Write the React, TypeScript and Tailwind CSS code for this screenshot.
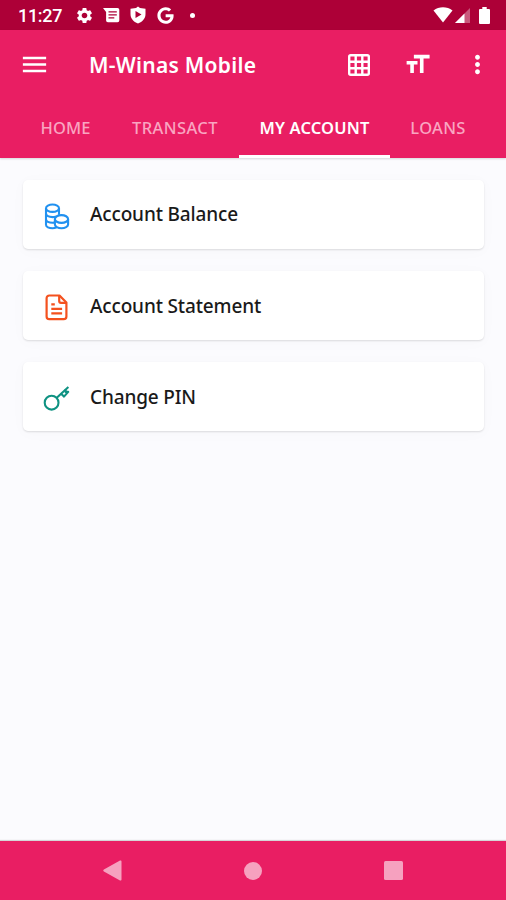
import type { ReactNode } from "react";
import { MdFormatSize, MdMenu, MdMoreVert, MdSettings } from "react-icons/md";
import { FaGoogle } from "react-icons/fa";

const tabs = [
  { label: "HOME", width: "w-[91px]", spacing: "tracking-[0.1px]" },
  { label: "TRANSACT", width: "w-[128px]", spacing: "tracking-[0.4px]" },
  { label: "MY ACCOUNT", width: "w-[151px]", spacing: "tracking-[0.15px]" },
  { label: "LOANS", width: "w-[96px]", spacing: "tracking-[0.3px]" },
];

const activeTab = "MY ACCOUNT";

function GridIcon() {
  return (
    <svg
      viewBox="0 0 22 22"
      className="ml-[2px] mr-[2px] w-[22px] h-[22px]"
      fill="none"
      stroke="currentColor"
      strokeWidth="2.400"
    >
      <rect x="1.200" y="1.200" width="19.600" height="19.600" rx="1.500" />
      <path d="M7.700 1v20M14.300 1v20M1 7.700h20M1 14.300h20" />
    </svg>
  );
}

function CoinsIcon() {
  return (
    <svg
      viewBox="0 0 27 27"
      className="w-[27px] h-[27px]"
      fill="none"
      stroke="#2191f0"
      strokeWidth="2.1"
    >
      <ellipse cx="9.500" cy="5.200" rx="6.500" ry="3.700" />
      <path d="M3 5v16.700c0 2 2.900 3.500 6.500 3.500 1.600 0 3-.3 4.100-.8" />
      <path d="M16 5v6.800" />
      <path d="M3 10.600c0 2 2.900 3.500 6.500 3.500 1.300 0 2.500-.2 3.500-.6" />
      <path d="M3 16.200c0 2 2.900 3.500 6.500 3.500.6 0 1.200 0 1.700-.1" />
      <ellipse cx="18.500" cy="16" rx="6.600" ry="3.900" fill="#fff" />
      <path d="M11.900 16v5.500c0 2 2.900 3.700 6.600 3.700s6.600-1.700 6.600-3.700V16" />
    </svg>
  );
}

function StatementIcon() {
  return (
    <svg
      viewBox="0 0 24 27"
      className="ml-[2px] w-[24px] h-[27px]"
      fill="none"
      stroke="#f4511e"
      strokeWidth="2.200"
      strokeLinejoin="round"
    >
      <path d="M4.300 1.500H14.500l6.900 7v14a2.700 2.700 0 0 1-2.700 2.700H4.300a2.700 2.700 0 0 1-2.700-2.700V4.200a2.700 2.700 0 0 1 2.700-2.700z" />
      <path d="M14.200 2v5a1.800 1.800 0 0 0 1.800 1.800h5" />
      <path d="M6.300 10.300h3.500M6.300 14.800h10.800M6.300 19.300h10.800" />
    </svg>
  );
}

function KeyIcon() {
  return (
    <svg
      viewBox="0 0 28 27"
      className="w-[28px] h-[27px]"
      fill="none"
      stroke="#0f9282"
      strokeWidth="2.100"
      strokeLinejoin="round"
    >
      <circle cx="8.600" cy="17.700" r="6.900" />
      <path d="M13.500 12.900 25.400 2" />
      <path d="M22.600 4.600v2.300h2.600l-4.200 4.700-3.200-3.200" />
    </svg>
  );
}

const items: { label: string; icon: ReactNode; offset: string }[] = [
  { label: "Account Balance", icon: <CoinsIcon />, offset: "-mt-px" },
  { label: "Account Statement", icon: <StatementIcon />, offset: "mt-px" },
  { label: "Change PIN", icon: <KeyIcon />, offset: "mt-px" },
];

function StatusBar() {
  return (
    <div className="flex h-[30px] shrink-0 items-center bg-[#ad0037] pl-[18px] pr-[16px] text-white">
      <span className="mt-[2px] w-[57px] text-[18px] leading-none font-medium tracking-[-0.3px] font-[Roboto,sans-serif] whitespace-nowrap">
        11:27
      </span>
      <MdSettings className="w-[19px] h-[19px]" />
      {/* Messages */}
      <svg viewBox="0 0 17 15" className="ml-[9px] w-[17px] h-[15px]">
        <path
          fill="currentColor"
          fillRule="evenodd"
          d="M0 0h14.5A1.8 1.8 0 0 1 16.3 1.8v10.7a1.8 1.8 0 0 1-1.8 1.8H4.9a1.8 1.8 0 0 1-1.8-1.8V4zM5.5 3.3v1.3h8.3V3.3zM5.5 6.3v1.3h8.3V6.3zM5.5 9.3v1.3h5.8V9.3z"
        />
      </svg>
      {/* Play Protect */}
      <svg viewBox="0 0 16 18" className="ml-[10px] w-[16px] h-[18px]">
        <path
          fill="currentColor"
          fillRule="evenodd"
          d="M8 .5 10 2l5.5.8V8c0 4.500-3 7.800-7.500 9.500C3.500 15.800.5 12.500.5 8V2.800L6 2zM5.500 5v7l6-3.500z"
        />
      </svg>
      <FaGoogle className="ml-[11px] w-[17px] h-[17px]" />
      <span className="ml-[16px] w-[5px] h-[5px] rounded-full bg-white" />
      <div className="ml-auto flex items-center">
        <svg viewBox="0 0 20 16" className="w-[20px] h-[16px]">
          <path fill="currentColor" d="M.5 3.500C6-.8 14-.8 19.500 3.500L10 15.500z" />
        </svg>
        <svg viewBox="0 0 16 15" className="ml-[2px] w-[16px] h-[15px]">
          <path fill="currentColor" opacity=".35" d="M15 0v15H0z" />
          <path fill="currentColor" d="M9.500 5.500V15H0z" />
        </svg>
        <svg viewBox="0 0 11 17" className="ml-[8px] w-[11px] h-[17px]">
          <path
            fill="currentColor"
            d="M3.300 0h4.400v2H10a1 1 0 0 1 1 1v13a1 1 0 0 1-1 1H1a1 1 0 0 1-1-1V3a1 1 0 0 1 1-1h2.300z"
          />
        </svg>
      </div>
    </div>
  );
}

export default function App() {
  return (
    <div className="flex h-[900px] w-[506px] flex-col overflow-hidden bg-[#fbfbfe] font-['Noto_Sans','Open_Sans',sans-serif]">
      <StatusBar />

      {/* App bar */}
      <header className="h-[128px] shrink-0 bg-[#e91e63] text-white shadow-[0_1px_2px_rgba(0,0,0,0.15)]">
        <div className="flex h-[69px] items-center pl-[19px]">
          <MdMenu className="w-[31px] h-[31px]" />
          <h1 className="ml-[39px] mt-[3px] w-[257px] text-[21px] font-semibold tracking-[0.27px] whitespace-nowrap">
            M-Winas Mobile
          </h1>
          <GridIcon />
          <MdFormatSize className="ml-[31px] w-[29px] h-[29px]" />
          <MdMoreVert className="ml-[31px] w-[29px] h-[29px]" />
        </div>
        <nav className="flex h-[59px] pl-[20px]">
          {tabs.map((tab) => (
            <div
              key={tab.label}
              className={`${tab.width} ${tab.spacing} flex justify-center border-b-[3px] pt-[17px] text-[16.500px] leading-[24px] whitespace-nowrap ${
                tab.label === activeTab
                  ? "border-white font-semibold text-white"
                  : "border-transparent font-medium text-[#f9a5c1]"
              }`}
            >
              {tab.label}
            </div>
          ))}
        </nav>
      </header>

      {/* Account actions */}
      <main className="flex flex-1 flex-col gap-[22px] px-[23px] pt-[22px]">
        {items.map((item) => (
          <div
            key={item.label}
            className="flex h-[69px] w-[461px] items-center rounded-[5px] bg-white pl-[20px] shadow-[0_1px_2px_rgba(0,0,0,0.12),0_2px_16px_rgba(0,0,0,0.025)]"
          >
            <span className="mt-[3px] flex w-[47px]">{item.icon}</span>
            <span
              className={`${item.offset} text-[19px] leading-[28px] font-medium tracking-[-0.15px] whitespace-nowrap text-[#1a1a1a]`}
            >
              {item.label}
            </span>
          </div>
        ))}
      </main>

      {/* System navigation */}
      <footer className="flex h-[59px] shrink-0 items-center bg-[#e91e63] pl-[103px] text-[#f6a1bf] shadow-[0_-1px_1px_rgba(0,0,0,0.15)]">
        <svg viewBox="0 0 19 21" className="w-[19px] h-[21px]">
          <path
            fill="currentColor"
            d="M17 .6.9 9.500a1.100 1.100 0 0 0 0 2L17 20.400a1 1 0 0 0 1.500-.9v-18A1 1 0 0 0 17 .6z"
          />
        </svg>
        <span className="ml-[122px] w-[18px] h-[18px] rounded-full bg-[#f6a1bf]" />
        <span className="ml-[122px] w-[19px] h-[19px] rounded-[1.500px] bg-[#f6a1bf]" />
      </footer>
    </div>
  );
}
